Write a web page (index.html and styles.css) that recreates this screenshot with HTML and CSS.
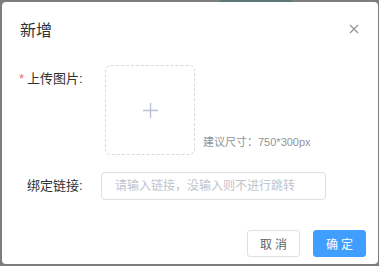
FILE: index.html
```html
<!DOCTYPE html>
<html lang="zh-CN">
<head>
    <meta charset="UTF-8">
    <meta name="viewport" content="width=device-width, initial-scale=1.0">
    <title>新增</title>
    <link rel="stylesheet" href="styles.css">
</head>
<body>
    <div class="dialog">
        <div class="dialog-header">
            <span class="dialog-title">新增</span>
            <button class="dialog-close" aria-label="关闭">
                <svg width="10" height="10" viewBox="0 0 10 10">
                    <path d="M1 1 L9 9 M9 1 L1 9" stroke="#909399" stroke-width="1.2" fill="none"/>
                </svg>
            </button>
        </div>

        <div class="dialog-body">
            <div class="form-item">
                <label class="form-label required">上传图片:</label>
                <div class="upload-box">
                    <svg width="15" height="15" viewBox="0 0 15 15">
                        <path d="M7.5 0 V15 M0 7.5 H15" stroke="#b9c0d4" stroke-width="1.4" fill="none"/>
                    </svg>
                </div>
                <span class="upload-tip">建议尺寸：750*300px</span>
            </div>

            <div class="form-item">
                <label class="form-label">绑定链接:</label>
                <input class="form-input" type="text" placeholder="请输入链接，没输入则不进行跳转">
            </div>
        </div>

        <div class="dialog-footer">
            <button class="btn">取消</button>
            <button class="btn btn-primary">确定</button>
        </div>
    </div>
</body>
</html>
```

FILE: styles.css
```css
body {
    margin: 0;
    height: 266px;
    overflow: hidden;
    font-family: "Liberation Sans", "Noto Sans CJK SC", sans-serif;
    background: linear-gradient(to right, #7d7d7d 220px, #5c7876 220px, #5c7876 292px, #7d7d7d 292px) top / 100% 2px no-repeat, #7d7d7d;
}
.dialog {
    margin: 2px 0 0 2px;
    width: 376px;
    height: 262px;
    background-color: #fff;
    border-radius: 4px;
    box-sizing: border-box;
}
.dialog-header {
    display: flex;
    justify-content: space-between;
    align-items: center;
    padding: 17px 19px 0 18px;
}
.dialog-title {
    font-size: 16px;
    line-height: 24px;
    color: #303133;
}
.dialog-close {
    border: none;
    background: none;
    padding: 0;
    width: 10px;
    height: 10px;
    margin-top: -4px;
    cursor: pointer;
    display: flex;
}
.dialog-body {
    padding-top: 22px;
}
.form-item {
    display: flex;
    align-items: flex-start;
    margin-bottom: 17px;
}
.form-label {
    width: 99px;
    box-sizing: border-box;
    padding-left: 25px;
    font-size: 13px;
    line-height: 28px;
    color: #303133;
}
.form-label.required::before {
    content: "*";
    display: inline-block;
    width: 8px;
    margin-left: -8px;
    color: #f56c6c;
}
.upload-box {
    margin-left: 4px;
    width: 90px;
    height: 90px;
    box-sizing: border-box;
    border: 1px dashed #d9d9d9;
    border-radius: 6px;
    display: flex;
    align-items: center;
    justify-content: center;
}
.upload-tip {
    align-self: flex-end;
    margin: 0 0 5px 8px;
    font-size: 11px;
    line-height: 16px;
    color: #909399;
}
.form-input {
    width: 225px;
    height: 28px;
    box-sizing: border-box;
    border: 1px solid #dcdfe6;
    border-radius: 4px;
    padding: 0 13px;
    font-family: inherit;
    font-size: 12px;
    color: #606266;
    outline: none;
}
.form-input::placeholder {
    color: #c0c4cc;
}
.dialog-footer {
    display: flex;
    justify-content: flex-end;
    gap: 13px;
    padding: 13px 12px 0 0;
}
.btn {
    width: 53px;
    height: 27px;
    padding: 0 0 0 3px;
    border: 1px solid #dcdfe6;
    border-radius: 3px;
    background-color: #fff;
    color: #606266;
    font-family: inherit;
    font-size: 12px;
    letter-spacing: 3px;
    cursor: pointer;
}
.btn-primary {
    background-color: #409eff;
    border-color: #409eff;
    color: #fff;
}
```
